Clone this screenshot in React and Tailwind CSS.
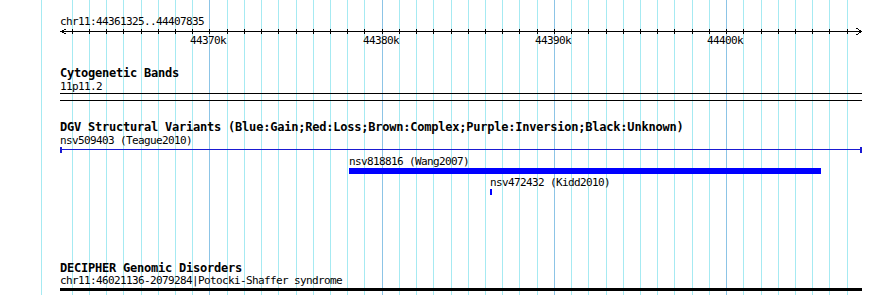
import React from 'react';

const START = 44361325;
const END = 44407835;
const LEFT = 60;
const WIDTH = 801;

const toX = (bp) => Math.round(LEFT + ((bp - START) * WIDTH) / (END - START));

const ticks = Array.from({ length: 46 }, (_, i) => 44362000 + i * 1000);
const majors = [44370000, 44380000, 44390000, 44400000];

const features = [
  { name: 'nsv818816 (Wang2007)', start: 44378106, end: 44405513 },
  { name: 'nsv472432 (Kidd2010)', start: 44386293, end: 44386409 },
];

const label = 'text-[11px] leading-[12px] tracking-[-0.62px] whitespace-nowrap';
const title = 'text-[12px] leading-[13px] font-bold tracking-[-0.22px] whitespace-nowrap';

function Grid() {
  return (
    <svg className="absolute inset-0" width="890" height="295" shapeRendering="crispEdges">
      <rect x="41" y="0" width="1" height="295" fill="#a6eaf2" />
      {ticks.map((bp) => (
        <rect
          key={bp}
          x={toX(bp)}
          y="0"
          width="1"
          height="295"
          fill={bp % 10000 === 0 ? '#8cc4e6' : '#a6eaf2'}
        />
      ))}
    </svg>
  );
}

function Ruler() {
  return (
    <>
      <div className={`${label} pl-[60px]`}>chr11:44361325..44407835</div>
      <svg width="890" height="7" className="block" shapeRendering="crispEdges">
        <rect x="60" y="3" width="801" height="1" fill="#000" />
        <polyline points="65.5,1 61,3.5 65.5,6" fill="none" stroke="#000" strokeWidth="1" />
        <polyline points="856.5,0 861,3.5 856.5,7" fill="none" stroke="#000" strokeWidth="1" />
        {ticks.map((bp) => (
          <rect key={bp} x={toX(bp)} y="1" width="1" height="5" fill="#000" />
        ))}
      </svg>
      <div className="relative h-[12px]">
        {majors.map((bp) => (
          <span key={bp} className={`${label} absolute top-0`} style={{ left: toX(bp) - 19 }}>
            {bp / 1000}k
          </span>
        ))}
      </div>
    </>
  );
}

export default function App() {
  return (
    <div className="relative w-[890px] h-[295px] bg-white overflow-hidden text-black font-['DejaVu_Sans_Mono',monospace]">
      <Grid />
      <div className="relative pt-[16px]">
        <Ruler />

        <div className={`${title} pl-[60px] mt-[20px]`}>Cytogenetic Bands</div>
        <div className={`${label} pl-[60px] mt-[1px]`}>11p11.2</div>
        <div className="ml-[60px] w-[802px] h-[8px] border-t border-b border-black" />

        <div className={`${title} pl-[60px] mt-[20px]`}>
          DGV Structural Variants (Blue:Gain;Red:Loss;Brown:Complex;Purple:Inversion;Black:Unknown)
        </div>
        <div className={`${label} pl-[60px] mt-[1px]`}>nsv509403 (Teague2010)</div>
        <div className="ml-[60px] w-[802px] h-[6px] flex items-start">
          <div className="w-[2px] h-[6px] bg-[#1a1ad2]" />
          <div className="flex-1 h-[1px] mt-[2px] bg-[#1a1ad2]" />
          <div className="w-[2px] h-[6px] bg-[#1a1ad2]" />
        </div>

        <div className="mt-[3px] flex flex-col gap-[3px]">
          {features.map((f) => (
            <div key={f.name} style={{ marginLeft: toX(f.start) }}>
              <div className={label}>{f.name}</div>
              <div
                className="h-[6px] bg-[#0000ff]"
                style={{ width: Math.max(2, toX(f.end) - toX(f.start)) }}
              />
            </div>
          ))}
        </div>

        <div className={`${title} pl-[60px] mt-[67px]`}>DECIPHER Genomic Disorders</div>
        <div className={`${label} pl-[60px]`}>chr11:46021136-2079284|Potocki-Shaffer syndrome</div>
        <div className="ml-[60px] w-[802px] h-[3px] mt-[1px] bg-black" />
      </div>
    </div>
  );
}
